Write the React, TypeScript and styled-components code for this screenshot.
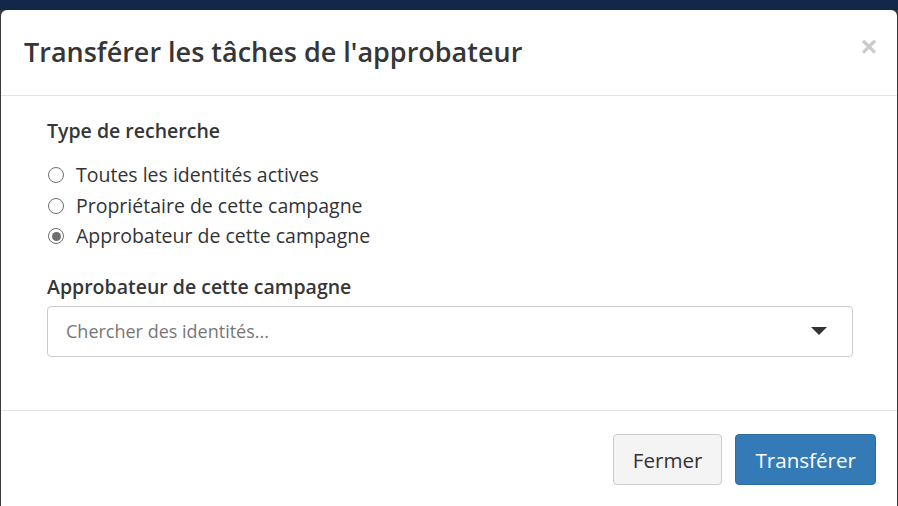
import React from "react";
import styled, { createGlobalStyle } from "styled-components";

const Global = createGlobalStyle`
  html, body { margin: 0; padding: 0; }
  body {
    width: 898px; height: 506px; overflow: hidden;
    background: #12284a;
    font-family: "Open Sans", "Noto Sans", sans-serif;
  }
  #root { height: 506px; }
`;

const Backdrop = styled.div`
  height: 506px;
  padding: 10px 0 0 1px;
  box-sizing: border-box;
  background: linear-gradient(#12284a 0 10px, #3a3a3a 10px);
`;

const Modal = styled.div`
  width: 896px;
  height: 520px;
  background: #fff;
  border-radius: 6px;
  display: flex;
  flex-direction: column;
`;

const Header = styled.div`
  height: 86px;
  flex-shrink: 0;
  box-sizing: border-box;
  border-bottom: 1px solid #e5e5e5;
  display: flex;
  align-items: center;
  justify-content: space-between;
  padding: 0 20px 0 23px;
`;

const Title = styled.h4`
  margin: 0;
  font-size: 27px;
  line-height: 36px;
  font-weight: 600;
  color: #363636;
  padding-bottom: 2px;
`;

const Close = styled.button`
  border: 0;
  background: none;
  padding: 0;
  font-size: 28px;
  font-weight: 700;
  line-height: 1;
  color: #cacaca;
  font-family: "Liberation Sans", Arial, sans-serif;
  margin-top: -12px;
  cursor: pointer;
`;

const Body = styled.div`
  height: 315px;
  flex-shrink: 0;
  box-sizing: border-box;
  border-bottom: 1px solid #e5e5e5;
  padding: 22px 44px 0 46px;
`;

const Label = styled.div<{ $gap: number }>`
  font-size: 19.5px;
  line-height: 26px;
  font-weight: 600;
  color: #363636;
  margin-bottom: ${(p) => p.$gap}px;
`;

const RadioList = styled.div`
  display: flex;
  flex-direction: column;
  gap: 4px;
  margin-top: 18px;
  margin-bottom: 24px;
`;

const RadioRow = styled.label`
  display: flex;
  align-items: center;
  gap: 12px;
  font-size: 19.5px;
  line-height: 26.5px;
  color: #333;
`;

const RadioCircle = styled.span<{ $checked?: boolean }>`
  width: 16px;
  height: 16px;
  flex-shrink: 0;
  box-sizing: border-box;
  border: 1.5px solid #6f6f6f;
  border-radius: 50%;
  display: flex;
  align-items: center;
  justify-content: center;
  margin-left: 1px;
  &::after {
    content: "";
    width: 9px;
    height: 9px;
    border-radius: 50%;
    background: #707070;
    display: ${(p) => (p.$checked ? "block" : "none")};
  }
`;

const SelectBox = styled.div`
  height: 51px;
  box-sizing: border-box;
  border: 1px solid #ccc;
  border-radius: 4px;
  display: flex;
  align-items: center;
  justify-content: space-between;
  padding: 0 25px 0 18px;
  font-size: 18px;
  color: #777;
`;

const Caret = styled.span`
  width: 0;
  height: 0;
  border-left: 8px solid transparent;
  border-right: 8px solid transparent;
  border-top: 8px solid #333;
`;

const Footer = styled.div`
  display: flex;
  justify-content: flex-end;
  gap: 13px;
  padding: 23px 21px 0 0;
`;

const Button = styled.button<{ $primary?: boolean }>`
  height: 51px;
  box-sizing: border-box;
  padding: 0 19px;
  border-radius: 4px;
  font-family: "Open Sans", "Noto Sans", sans-serif;
  font-size: 20.6px;
  border: 1px solid ${(p) => (p.$primary ? "#2e6da4" : "#ccc")};
  background: ${(p) => (p.$primary ? "#337ab7" : "#f4f4f4")};
  color: ${(p) => (p.$primary ? "#fff" : "#333")};
`;

export default function App() {
  return (
    <>
      <Global />
      <Backdrop>
        <Modal>
          <Header>
            <Title>Transférer les tâches de l'approbateur</Title>
            <Close>×</Close>
          </Header>
          <Body>
            <Label $gap={0}>Type de recherche</Label>
            <RadioList>
              <RadioRow>
                <RadioCircle />
                Toutes les identités actives
              </RadioRow>
              <RadioRow>
                <RadioCircle />
                Propriétaire de cette campagne
              </RadioRow>
              <RadioRow>
                <RadioCircle $checked />
                Approbateur de cette campagne
              </RadioRow>
            </RadioList>
            <Label $gap={6}>Approbateur de cette campagne</Label>
            <SelectBox>
              Chercher des identités...
              <Caret />
            </SelectBox>
          </Body>
          <Footer>
            <Button>Fermer</Button>
            <Button $primary>Transférer</Button>
          </Footer>
        </Modal>
      </Backdrop>
    </>
  );
}
